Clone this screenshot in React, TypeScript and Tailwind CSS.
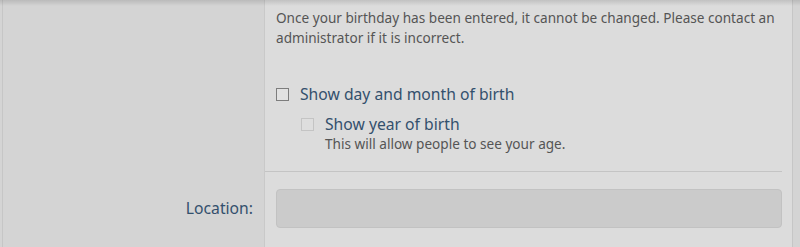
export default function App() {
  return (
    <div
      className="relative h-[247px] w-[800px] overflow-hidden bg-[#d4d4d4]"
      style={{ fontFamily: '"Noto Sans", "Open Sans", sans-serif' }}
    >
      <div className="ml-[2px] flex h-full w-[791px] border-x border-[#c6c6c6]">
        <div className="w-[261px] shrink-0 bg-[#d4d4d4]">
          <div className="h-[171px]" />
          <div className="pr-[11px] pt-[26px] text-right text-[15.7px] leading-[22px] text-[#33506d]">
            Location:
          </div>
        </div>
        <div className="flex-1 border-l border-[#c9c9c9] bg-[#dcdcdc]">
          <div className="h-[171px] pl-[11px] pr-[10px] pt-[8px]">
            <p className="text-[13.6px] leading-[20px] text-[#555555]">
              Once your birthday has been entered, it cannot be changed. Please contact an
              administrator if it is incorrect.
            </p>
            <label className="mt-[35px] flex items-center gap-[11px] text-[15.7px] leading-[22px] text-[#33506d]">
              <span className="h-[13px] w-[13px] border border-[#7d7d7d] bg-[#e2e2e2]" />
              Show day and month of birth
            </label>
            <div className="ml-[25px] mt-[8px]">
              <label className="flex items-center gap-[11px] text-[15.7px] leading-[22px] text-[#33506d]">
                <span className="h-[13px] w-[13px] border border-[#c4c4c4] bg-[#dedede]" />
                Show year of birth
              </label>
              <div className="pl-[24px] text-[13.6px] leading-[18px] text-[#555555]">
                This will allow people to see your age.
              </div>
            </div>
          </div>
          <div className="mr-[10px] border-t border-[#c4c4c4]" />
          <div className="pl-[11px] pr-[10px] pt-[17px]">
            <div className="h-[39px] rounded-[4px] border border-[#c2c2c2] bg-[#cbcbcb]" />
          </div>
        </div>
      </div>
      <div className="pointer-events-none absolute inset-x-0 top-0 h-[6px] bg-gradient-to-b from-[rgba(0,0,0,0.12)] to-transparent" />
    </div>
  );
}
